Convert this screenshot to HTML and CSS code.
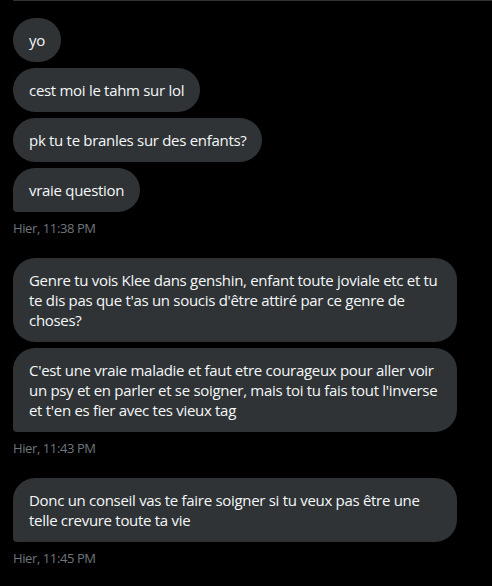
FILE: index.html
```html
<!DOCTYPE html>
<html lang="fr">
<head>
<meta charset="utf-8">
<link rel="stylesheet" href="styles.css">
</head>
<body>
<div class="topline"></div>
<main class="thread">
  <section class="group">
    <div class="bubble">yo</div>
    <div class="bubble">cest moi le tahm sur lol</div>
    <div class="bubble">pk tu te branles sur des enfants?</div>
    <div class="bubble last">vraie question</div>
    <div class="time">Hier, 11:38 PM</div>
  </section>
  <section class="group">
    <div class="bubble">Genre tu vois Klee dans genshin, enfant toute joviale etc et tu te dis pas que t'as un soucis d'être attiré par ce genre de choses?</div>
    <div class="bubble last">C'est une vraie maladie et faut etre courageux pour aller voir un psy et en parler et se soigner, mais toi tu fais tout l'inverse et t'en es fier avec tes vieux tag</div>
    <div class="time">Hier, 11:43 PM</div>
  </section>
  <section class="group">
    <div class="bubble last">Donc un conseil vas te faire soigner si tu veux pas être une telle crevure toute ta vie</div>
    <div class="time">Hier, 11:45 PM</div>
  </section>
</main>
</body>
</html>
```
FILE: styles.css
```css
html, body {
  margin: 0;
  padding: 0;
  background: #000;
  width: 492px;
  height: 586px;
  overflow: hidden;
}
body {
  font-family: "Open Sans", "Liberation Sans", sans-serif;
  color: #fff;
}
.topline {
  height: 1px;
  margin-left: 13px;
  background: #2f3336;
}
.thread {
  padding: 17px 0 0 13px;
  display: flex;
  flex-direction: column;
  gap: 21px;
}
.group {
  display: flex;
  flex-direction: column;
  align-items: flex-start;
  gap: 6px;
}
.bubble {
  max-width: 412px;
  padding: 12px 16px;
  background: #2f3336;
  border-radius: 22px;
  font-size: 15px;
  line-height: 20px;
  letter-spacing: -0.3px;
  color: #f5f7f8;
}
.bubble.last {
  border-bottom-left-radius: 4px;
}
.time {
  margin-top: 1px;
  font-size: 13px;
  line-height: 18px;
  letter-spacing: -0.4px;
  color: #6e767d;
}
```
